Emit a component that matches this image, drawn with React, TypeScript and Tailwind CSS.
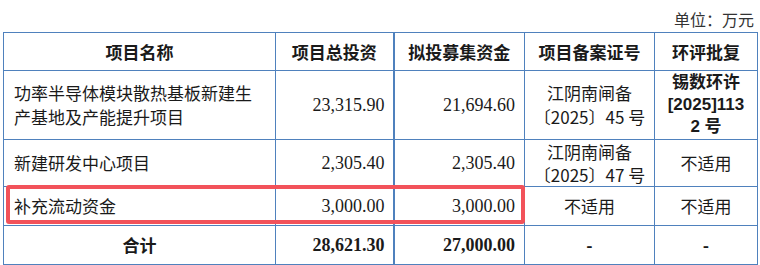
const cjk = "font-['Noto_Sans_CJK_SC',sans-serif]";
const num = "font-['Liberation_Serif','Noto_Sans_CJK_SC',serif] text-[18px]";

const line = "border border-[#4f81bd] p-0";

export default function App() {
  return (
    <div className="w-[760px] h-[265px] bg-white text-[#1a1a1a] overflow-hidden">
      <div className={`h-[32px] flex items-start justify-end pt-[9px] pr-[6px] text-[16px] leading-[20px] ${cjk} text-[#333]`}>
        单位：万元
      </div>
      <div className="relative ml-[3px] w-[754px]">
        <table className="w-[754px] border-collapse table-fixed">
          <colgroup>
            <col className="w-[272px]" />
            <col className="w-[118px]" />
            <col className="w-[131px]" />
            <col className="w-[130px]" />
            <col className="w-[103px]" />
          </colgroup>
          <thead>
            <tr className={`h-[38px] text-[17px] leading-[22px] font-bold ${cjk}`}>
              <th className={`${line} text-center`}>项目名称</th>
              <th className={`${line} text-center`}>项目总投资</th>
              <th className={`${line} border-l-2 text-center`}>拟投募集资金</th>
              <th className={`${line} text-center`}>项目备案证号</th>
              <th className={`${line} text-center`}>环评批复</th>
            </tr>
          </thead>
          <tbody className="text-[17px] leading-[24px]">
            <tr className="h-[69px]">
              <td className={`${line} ${cjk} px-[10px]`}>
                功率半导体模块散热基板新建生产基地及产能提升项目
              </td>
              <td className={`${line} ${num} text-right pr-[8px]`}>23,315.90</td>
              <td className={`${line} border-l-2 ${num} text-right pr-[9px]`}>21,694.60</td>
              <td className={`${line} ${cjk} text-center`}>
                <div>江阴南闸备</div>
                <div>〔2025〕45 号</div>
              </td>
              <td className={`${line} text-center leading-[22px] font-bold font-['Liberation_Sans','Noto_Sans_CJK_SC',sans-serif]`}>
                <div>锡数环许</div>
                <div>[2025]113</div>
                <div>2 号</div>
              </td>
            </tr>
            <tr className="h-[47px]">
              <td className={`${line} ${cjk} px-[10px]`}>新建研发中心项目</td>
              <td className={`${line} ${num} text-right pr-[8px]`}>2,305.40</td>
              <td className={`${line} border-l-2 ${num} text-right pr-[9px]`}>2,305.40</td>
              <td className={`${line} ${cjk} text-center leading-[23px]`}>
                <div>江阴南闸备</div>
                <div>〔2025〕47 号</div>
              </td>
              <td className={`${line} ${cjk} text-center`}>不适用</td>
            </tr>
            <tr className="h-[39px]">
              <td className={`${line} ${cjk} px-[10px]`}>补充流动资金</td>
              <td className={`${line} ${num} text-right pr-[8px]`}>3,000.00</td>
              <td className={`${line} border-l-2 ${num} text-right pr-[9px]`}>3,000.00</td>
              <td className={`${line} ${cjk} text-center`}>不适用</td>
              <td className={`${line} ${cjk} text-center`}>不适用</td>
            </tr>
            <tr className="h-[39px] font-bold">
              <td className={`${line} ${cjk} text-center`}>合计</td>
              <td className={`${line} ${num} text-right pr-[8px]`}>28,621.30</td>
              <td className={`${line} border-l-2 ${num} text-right pr-[9px]`}>27,000.00</td>
              <td className={`${line} ${cjk} text-center`}>-</td>
              <td className={`${line} ${cjk} text-center`}>-</td>
            </tr>
          </tbody>
        </table>
        <div className="absolute left-[3px] top-[153px] w-[519px] h-[39px] border-[4px] border-[#f2525a] rounded-[3px] pointer-events-none" />
      </div>
    </div>
  );
}
